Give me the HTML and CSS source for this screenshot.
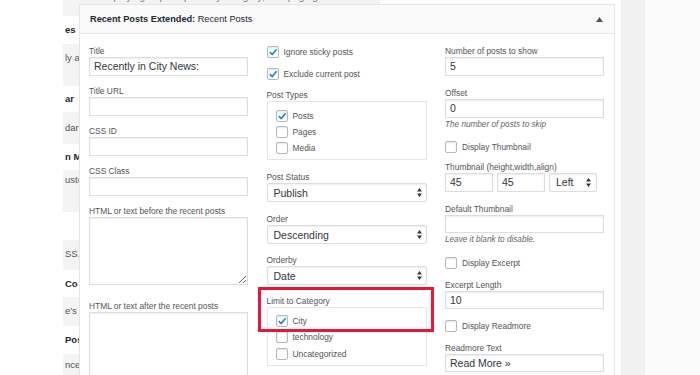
FILE: index.html
```html
<!DOCTYPE html>
<html lang="en">
<head>
<meta charset="utf-8">
<title>Recent Posts Extended widget</title>
<link rel="stylesheet" href="styles.css">
</head>
<body>
<div class="page">
  <div class="lead"></div>
  <div class="sidebar">
    <div class="srow sd h16"></div>
    <div class="srow sh h28">es</div>
    <div class="srow sd h42 pt8">ly a</div>
    <div class="srow sh h26">ar</div>
    <div class="srow sd h32 pt10">dar c</div>
    <div class="srow sh h26">n Me</div>
    <div class="srow sd h42 pt4">usto</div>
    <div class="srow sh h28"></div>
    <div class="srow sd h30 pt8">SS,</div>
    <div class="srow sh h27">Co</div>
    <div class="srow sd h29 pt8">e's r</div>
    <div class="srow sh h28">Pos</div>
    <div class="srow sd h30 pt5">nce</div>
  </div>
  <div class="main">
    <div class="topstrip"><p>Displays groups of posts by category, with paging</p></div>
    <div class="panel">
      <div class="phead">
        <span><b>Recent Posts Extended:</b> Recent Posts</span>
        <svg class="toggle" width="7" height="5" viewBox="0 0 7 5"><polygon points="0,5 3.5,0 7,5" fill="#50575e"/></svg>
      </div>
      <div class="pbody">
        <div class="col">
          <div class="field"><label class="lbl">Title</label><input class="inp" type="text" value="Recently in City News:"></div>
          <div class="field"><label class="lbl">Title URL</label><input class="inp" type="text" value=""></div>
          <div class="field"><label class="lbl">CSS ID</label><input class="inp" type="text" value=""></div>
          <div class="field"><label class="lbl">CSS Class</label><input class="inp" type="text" value=""></div>
          <div class="field fta"><label class="lbl">HTML or text before the recent posts</label><textarea class="ta ta1"></textarea></div>
          <div class="field"><label class="lbl">HTML or text after the recent posts</label><textarea class="ta ta2"></textarea></div>
        </div>
        <div class="col col2">
          <div class="check mb10"><span class="cb"><svg viewBox="0 0 10 10"><path d="M1.8 5.2 L4.2 7.6 L8.6 2.2" fill="none" stroke="#1e8cbe" stroke-width="1.7"/></svg></span>Ignore sticky posts</div>
          <div class="check mb10"><span class="cb"><svg viewBox="0 0 10 10"><path d="M1.8 5.2 L4.2 7.6 L8.6 2.2" fill="none" stroke="#1e8cbe" stroke-width="1.7"/></svg></span>Exclude current post</div>
          <label class="lbl">Post Types</label>
          <div class="box box-types">
            <div class="check"><span class="cb"><svg viewBox="0 0 10 10"><path d="M1.8 5.2 L4.2 7.6 L8.6 2.2" fill="none" stroke="#1e8cbe" stroke-width="1.7"/></svg></span>Posts</div>
            <div class="check"><span class="cb"></span>Pages</div>
            <div class="check"><span class="cb"></span>Media</div>
          </div>
          <div class="field f12"><label class="lbl">Post Status</label><div class="sel"><span>Publish</span><svg width="5" height="9" viewBox="0 0 5 9"><polygon points="0,3.6 2.5,0 5,3.6" fill="#32373c"/><polygon points="0,5.4 2.5,9 5,5.4" fill="#32373c"/></svg></div></div>
          <div class="field f11"><label class="lbl">Order</label><div class="sel"><span>Descending</span><svg width="5" height="9" viewBox="0 0 5 9"><polygon points="0,3.6 2.5,0 5,3.6" fill="#32373c"/><polygon points="0,5.4 2.5,9 5,5.4" fill="#32373c"/></svg></div></div>
          <div class="field f105"><label class="lbl">Orderby</label><div class="sel"><span>Date</span><svg width="5" height="9" viewBox="0 0 5 9"><polygon points="0,3.6 2.5,0 5,3.6" fill="#32373c"/><polygon points="0,5.4 2.5,9 5,5.4" fill="#32373c"/></svg></div></div>
          <label class="lbl">Limit to Category</label>
          <div class="box box-cats">
            <div class="check"><span class="cb"><svg viewBox="0 0 10 10"><path d="M1.8 5.2 L4.2 7.6 L8.6 2.2" fill="none" stroke="#1e8cbe" stroke-width="1.7"/></svg></span>City</div>
            <div class="check"><span class="cb"></span>technology</div>
            <div class="check"><span class="cb"></span>Uncategorized</div>
          </div>
          <div class="hl"></div>
        </div>
        <div class="col">
          <div class="field f125"><label class="lbl">Number of posts to show</label><input class="inp" type="text" value="5"></div>
          <div class="field f0"><label class="lbl">Offset</label><input class="inp" type="text" value="0"></div>
          <p class="desc mb115">The number of posts to skip</p>
          <div class="check mb9"><span class="cb"></span>Display Thumbnail</div>
          <div class="field f12"><label class="lbl">Thumbnail (height,width,align)</label>
            <div class="trio">
              <input class="inp small" type="text" value="45">
              <input class="inp small" type="text" value="45">
              <div class="sel small"><span>Left</span><svg width="5" height="9" viewBox="0 0 5 9"><polygon points="0,3.6 2.5,0 5,3.6" fill="#32373c"/><polygon points="0,5.4 2.5,9 5,5.4" fill="#32373c"/></svg></div>
            </div>
          </div>
          <div class="field f0"><label class="lbl">Default Thumbnail</label><input class="inp" type="text" value=""></div>
          <p class="desc mb12">Leave it blank to disable.</p>
          <div class="check mb105"><span class="cb"></span>Display Excerpt</div>
          <div class="field f11"><label class="lbl">Excerpt Length</label><input class="inp" type="text" value="10"></div>
          <div class="check mb105"><span class="cb"></span>Display Readmore</div>
          <div class="field f0"><label class="lbl">Readmore Text</label><input class="inp" type="text" value="Read More »"></div>
        </div>
      </div>
    </div>
  </div>
  <div class="gap"></div>
  <div class="strip"></div>
  <div class="rest"></div>
</div>
</body>
</html>
```

FILE: styles.css
```css
html, body {
  margin: 0;
  padding: 0;
}
body {
  width: 700px;
  height: 375px;
  overflow: hidden;
  background: #fff;
  font-family: "Liberation Sans", Arial, sans-serif;
}
.page {
  display: flex;
  height: 375px;
  overflow: hidden;
}
.lead {
  width: 63px;
  flex: none;
}
.sidebar {
  width: 16px;
  flex: none;
  overflow: hidden;
  white-space: nowrap;
  font-size: 9.5px;
  color: #555;
}
.srow {
  box-sizing: border-box;
  overflow: hidden;
  padding-left: 2px;
  line-height: 12px;
}
.sh {
  background: #fff;
  font-weight: bold;
  color: #23282d;
  display: flex;
  align-items: center;
}
.sd { background: #f4f4f4; }
.h16 { height: 16px; }
.h26 { height: 26px; }
.h27 { height: 27px; }
.h28 { height: 28px; }
.h29 { height: 29px; }
.h30 { height: 30px; }
.h32 { height: 32px; }
.h42 { height: 42px; }
.pt4 { padding-top: 4px; }
.pt5 { padding-top: 5px; }
.pt8 { padding-top: 8px; }
.pt10 { padding-top: 10px; }

.main {
  width: 536px;
  flex: none;
  display: flex;
  flex-direction: column;
}
.topstrip {
  flex: none;
  height: 4px;
  width: 301px;
  background: #f3f3f3;
  overflow: hidden;
}
.topstrip p {
  margin: -9px 0 0 20px;
  font-size: 10px;
  line-height: 12px;
  color: #777;
  white-space: nowrap;
}
.panel {
  flex: none;
  border: 1px solid #e5e5e5;
  border-bottom: none;
  background: #fff;
}
.phead {
  height: 28px;
  background: #fafafa;
  border-bottom: 1px solid #e8e8e8;
  display: flex;
  align-items: center;
  justify-content: space-between;
  padding: 0 11px 0 10px;
  font-size: 9.2px;
  color: #23282d;
}
.phead b { font-weight: bold; }
.toggle { display: block; }
.pbody {
  display: grid;
  grid-template-columns: 159px 160px 159px;
  column-gap: 18.5px;
  padding: 12px 0 0 9px;
}
.col2 { position: relative; }

.lbl {
  display: block;
  font-size: 8.4px;
  line-height: 11px;
  color: #555;
}
.desc {
  margin: 1px 0 0;
  font-size: 8.2px;
  line-height: 11px;
  font-style: italic;
  color: #666;
}

.field { margin-bottom: 10.5px; }
.fta { margin-bottom: 15.5px; }
.f0 { margin-bottom: 0; }
.f105 { margin-bottom: 10.5px; }
.f11 { margin-bottom: 11px; }
.f12 { margin-bottom: 12px; }
.f125 { margin-bottom: 12.5px; }
.mb9 { margin-bottom: 9px; }
.mb10 { margin-bottom: 10px; }
.mb105 { margin-bottom: 10.5px; }
.mb115 { margin-bottom: 11.5px; }
.mb12 { margin-bottom: 12px; }

.inp {
  display: block;
  box-sizing: border-box;
  width: 100%;
  height: 18.5px;
  margin: 0;
  padding: 0 4px;
  border: 1px solid #ddd;
  border-radius: 0;
  box-shadow: inset 0 1px 2px rgba(0, 0, 0, 0.07);
  background: #fff;
  font-family: "Liberation Sans", Arial, sans-serif;
  font-size: 10.5px;
  color: #32373c;
  outline: none;
}
.ta {
  display: block;
  box-sizing: border-box;
  width: 100%;
  margin: 0;
  border: 1px solid #ddd;
  box-shadow: inset 0 1px 2px rgba(0, 0, 0, 0.07);
  background: #fff;
  outline: none;
}
.ta1 { height: 68px; }
.ta2 { height: 80px; }

.check {
  display: flex;
  align-items: center;
  gap: 5px;
  height: 12px;
  font-size: 8.4px;
  color: #555;
}
.cb {
  box-sizing: border-box;
  width: 12px;
  height: 12px;
  flex: none;
  border: 1px solid #b4b9be;
  border-radius: 2px;
  background: #fff;
  box-shadow: inset 0 1px 2px rgba(0, 0, 0, 0.1);
}
.cb svg {
  display: block;
  width: 10px;
  height: 10px;
}
.box {
  border: 1px solid #e6e6e6;
  display: flex;
  flex-direction: column;
}
.box-types {
  padding: 8px 8px 5px;
  gap: 4px;
  margin-bottom: 12px;
}
.box-cats {
  padding: 7px 8px 5px;
  gap: 4.7px;
}
.sel {
  box-sizing: border-box;
  height: 19px;
  display: flex;
  align-items: center;
  justify-content: space-between;
  padding: 0 4px 0 6px;
  border: 1px solid #ddd;
  border-radius: 2px;
  box-shadow: inset 0 1px 2px rgba(0, 0, 0, 0.07);
  background: #fff;
  font-size: 10.5px;
  color: #32373c;
}
.sel svg { display: block; }
.trio {
  display: flex;
  gap: 4px;
}
.small {
  width: 48px;
  height: 18.5px;
  flex: none;
}
.sel.small { padding: 0 5px 0 6px; }
.hl {
  position: absolute;
  left: -8.5px;
  top: 241px;
  width: 176px;
  height: 45px;
  box-sizing: border-box;
  border: 3px solid #e8173a;
}
.gap {
  width: 6px;
  flex: none;
}
.strip {
  width: 24px;
  flex: none;
  background: #f1f1f1;
}
.rest {
  flex: 1;
  background: #fbfbfb;
}
```
